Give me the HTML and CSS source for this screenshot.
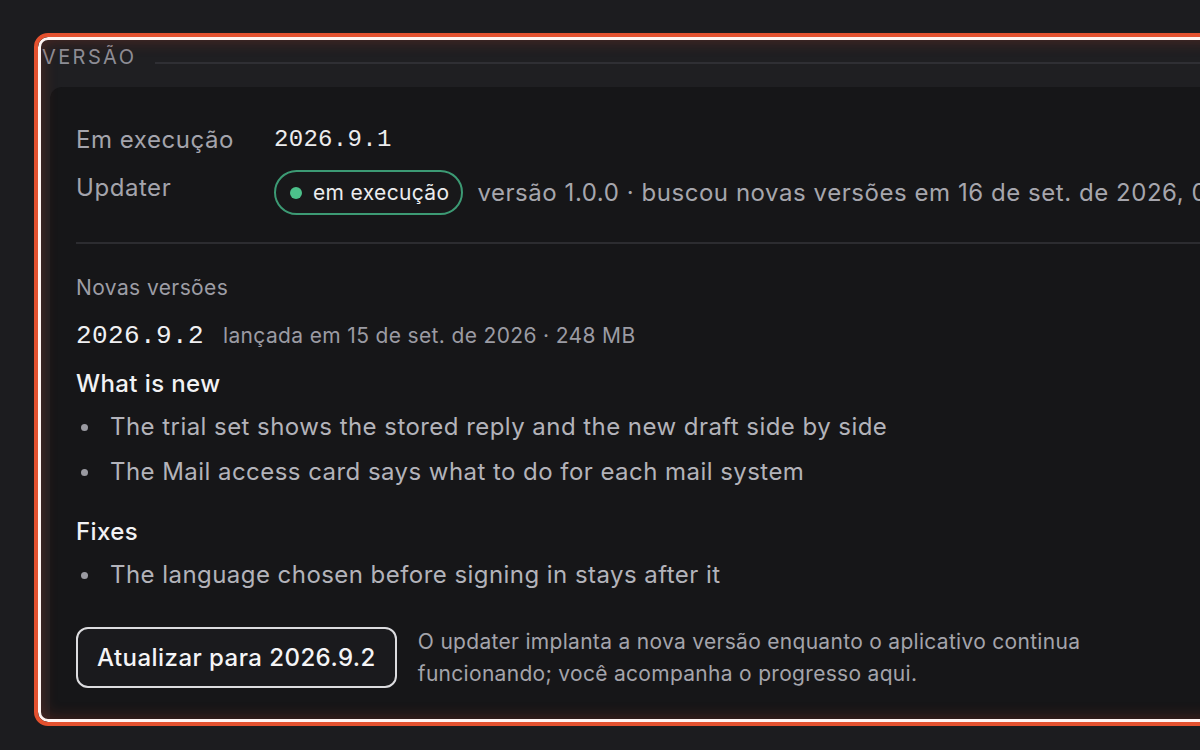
FILE: index.html
```html
<!DOCTYPE html>
<html lang="pt-BR">
<head>
<meta charset="utf-8">
<title>Versão</title>
<link rel="stylesheet" href="styles.css">
</head>
<body>
<div class="page">
  <section class="section">
    <div class="legend">
      <span class="legend-text">VERSÃO</span>
      <span class="legend-line"></span>
    </div>
    <div class="card">
      <div class="info">
        <div class="label">Em execução</div>
        <div class="value mono">2026.9.1</div>
        <div class="label">Updater</div>
        <div class="updater">
          <span class="pill"><span class="dot"></span>em execução</span>
          <span class="meta">versão 1.0.0 · buscou novas versões em 16 de set. de 2026, 09:12</span>
        </div>
      </div>
      <hr class="divider">
      <div class="subhead">Novas versões</div>
      <div class="release">
        <span class="release-version mono">2026.9.2</span>
        <span class="release-meta">lançada em 15 de set. de 2026 · 248 MB</span>
      </div>
      <h3 class="group">What is new</h3>
      <ul class="notes">
        <li>The trial set shows the stored reply and the new draft side by side</li>
        <li>The Mail access card says what to do for each mail system</li>
      </ul>
      <h3 class="group group-fixes">Fixes</h3>
      <ul class="notes">
        <li>The language chosen before signing in stays after it</li>
      </ul>
      <div class="actions">
        <button class="update-btn">Atualizar para 2026.9.2</button>
        <p class="hint">O updater implanta a nova versão enquanto o aplicativo continua funcionando; você acompanha o progresso aqui.</p>
      </div>
    </div>
  </section>
</div>
</body>
</html>
```

FILE: styles.css
```css
html, body {
  margin: 0;
  padding: 0;
  background: #1c1c1f;
  overflow: hidden;
  height: 100%;
}

body {
  font-family: Inter, "Noto Sans", sans-serif;
  color: #ececee;
}

.page {
  padding: 37px 0 0 38px;
  width: 1300px;
}

.section {
  position: relative;
  width: 1220px;
  height: 682px;
  padding: 3px 0 0 3px;
  background: #1f1f22;
  border-radius: 10px 0 0 10px;
  overflow: hidden;
  outline: 4px solid #e4512f;
}

.section::after {
  content: "";
  position: absolute;
  inset: 0;
  border: 3px solid #fff4f2;
  border-radius: 10px;
  box-shadow: inset 0 0 16px rgba(220, 70, 40, 0.28);
  pointer-events: none;
}

.legend {
  display: flex;
  align-items: center;
  height: 28px;
  margin-top: 3px;
}

.legend-text {
  font-size: 20px;
  letter-spacing: 2.4px;
  color: #8d8d95;
  margin-left: 1px;
}

.legend-line {
  flex: 1;
  height: 2px;
  background: #2f2f34;
  margin-left: 19px;
  margin-top: 12px;
}

.card {
  margin: 16px 0 0 9px;
  background: #161618;
  border-radius: 12px 0 0 0;
  padding: 35px 0 40px 26px;
  height: 700px;
}

.info {
  display: grid;
  grid-template-columns: 198px 1fr;
  row-gap: 12px;
  align-items: start;
}

.label {
  font-size: 24px;
  letter-spacing: 0.55px;
  line-height: 36px;
  color: #a4a4ac;
}

.value {
  font-size: 24px;
  line-height: 36px;
  color: #ececee;
  letter-spacing: 0.3px;
}

.mono {
  font-family: "Liberation Mono", "DejaVu Sans Mono", monospace;
}

.updater {
  display: flex;
  align-items: center;
  white-space: nowrap;
}

.pill {
  display: inline-flex;
  align-items: center;
  height: 45px;
  box-sizing: border-box;
  padding: 0 12px 0 14px;
  border: 2px solid #3c9a74;
  border-radius: 23px;
  background: #18181a;
  font-size: 21px;
  letter-spacing: 0.35px;
  color: #ececee;
}

.dot {
  width: 12px;
  height: 12px;
  border-radius: 50%;
  background: #4cc08a;
  margin-right: 11px;
}

.meta {
  margin-left: 14px;
  font-size: 24px;
  letter-spacing: 0.55px;
  color: #a6a6ad;
}

.divider {
  border: 0;
  height: 2px;
  background: #2c2c30;
  margin: 27px 0 0 0;
}

.subhead {
  margin-top: 30px;
  font-size: 21px;
  letter-spacing: 0.4px;
  line-height: 28px;
  color: #9d9da5;
}

.release {
  display: flex;
  align-items: baseline;
  margin-top: 16px;
  height: 36px;
  line-height: 36px;
}

.release-version {
  font-size: 26px;
  color: #f0f0f2;
  letter-spacing: 0.4px;
}

.release-meta {
  margin-left: 19px;
  font-size: 21px;
  letter-spacing: 0.35px;
  color: #9b9ba3;
}

.group {
  margin: 14px 0 0 0;
  font-size: 24px;
  letter-spacing: 0.4px;
  line-height: 32px;
  font-weight: 500;
  color: #f2f2f4;
}

.group-fixes {
  margin-top: 26px;
}

.notes {
  list-style: none;
  margin: 9px 0 0 0;
  padding: 0;
}

.notes li {
  position: relative;
  padding-left: 34px;
  font-size: 24px;
  letter-spacing: 0.45px;
  line-height: 36px;
  color: #b3b3ba;
}

.notes li + li {
  margin-top: 9px;
}

.notes li::before {
  content: "";
  position: absolute;
  left: 5px;
  top: 15px;
  width: 7px;
  height: 7px;
  border-radius: 50%;
  background: #9a9aa1;
}

.actions {
  display: flex;
  align-items: flex-start;
  margin-top: 34px;
}

.update-btn {
  flex: none;
  height: 61px;
  padding: 0 19px;
  background: #1a1a1d;
  border: 2px solid #dcdcdf;
  border-radius: 12px;
  font-family: Inter, "Noto Sans", sans-serif;
  font-size: 24px;
  letter-spacing: 0.45px;
  font-weight: 500;
  color: #f4f4f6;
}

.hint {
  margin: -1px 0 0 21px;
  width: 690px;
  font-size: 21px;
  letter-spacing: 0.3px;
  line-height: 32px;
  color: #a4a4ab;
}
```
